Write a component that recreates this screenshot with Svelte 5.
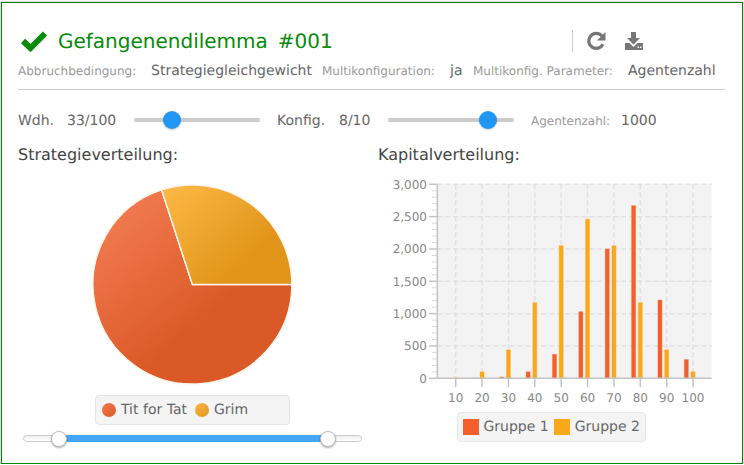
<script>
  const meta = [
    { label: 'Abbruchbedingung:', value: 'Strategiegleichgewicht' },
    { label: 'Multikonfiguration:', value: 'ja' },
    { label: 'Multikonfig. Parameter:', value: 'Agentenzahl' },
  ];

  // chart scale, in page coordinates (viewBox matches the page)
  const left = 437.3, right = 711.6, top = 184.3, bottom = 378.3;
  const y = (v) => bottom - (v / 3000) * (bottom - top);
  const x = (i) => 455.7 + i * 26.37;

  const group1 = [0, 3, 20, 100, 370, 1030, 2000, 2670, 1210, 290];
  const group2 = [10, 100, 440, 1170, 2050, 2460, 2050, 1170, 440, 100];
  const xLabels = [10, 20, 30, 40, 50, 60, 70, 80, 90, 100];
  const yLabels = [0, 500, 1000, 1500, 2000, 2500, 3000];
  const minor = Array.from({ length: 31 }, (_, i) => i * 100).filter((v) => v % 500 !== 0);
</script>

<div class="card">
  <header class="title-row">
    <svg class="check" width="28" height="22" viewBox="0 0 28 22">
      <path d="M3 11 L10.500 18 L25 3.500" fill="none" stroke="#078a07" stroke-width="6" />
    </svg>
    <h1>Gefangenendilemma<span class="num">#001</span></h1>
    <div class="tools">
      <span class="divider"></span>
      <svg width="22" height="22" viewBox="0 0 22 22" class="reload">
        <path d="M17 14.200 A7.500 7.500 0 1 1 15.900 5.900" fill="none" stroke="#777" stroke-width="3.200" />
        <path d="M19.500 2 V10.500 H11 Z" fill="#777" />
      </svg>
      <div class="save">
        <svg width="20" height="20" viewBox="0 0 20 20">
          <path d="M7 1 H12 V7 H16 L9.500 13.500 L3 7 H7 Z" fill="#777" />
          <path d="M1 12 H5.500 L9.500 16 L13.500 12 H19 V19 H1 Z" fill="#777" />
          <rect x="13.500" y="15.500" width="1.500" height="1.500" fill="#fff" />
          <rect x="16" y="15.500" width="1.500" height="1.500" fill="#fff" />
        </svg>
      </div>
    </div>
  </header>

  <div class="meta-row">
    {#each meta as m}
      <span class="label">{m.label}</span>
      <span class="value">{m.value}</span>
    {/each}
  </div>

  <hr />

  <div class="slider-row">
    <span class="value">Wdh.</span>
    <span class="value">33/100</span>
    <div class="slider"><i class="knob" style="left: 38px"></i></div>
    <span class="value">Konfig.</span>
    <span class="value">8/10</span>
    <div class="slider"><i class="knob" style="left: 100px"></i></div>
    <span class="label">Agentenzahl:</span>
    <span class="value">1000</span>
  </div>

  <div class="charts">
    <section class="col-left">
      <h2>Strategieverteilung:</h2>
      <svg class="pie" width="349" height="230" viewBox="18 165 349 230">
        <defs>
          <linearGradient id="redFill" gradientUnits="userSpaceOnUse" x1="120" y1="200" x2="215" y2="310">
            <stop offset="0" stop-color="#f37b52" />
            <stop offset="1" stop-color="#db5926" />
          </linearGradient>
          <linearGradient id="orangeFill" gradientUnits="userSpaceOnUse" x1="175" y1="185" x2="245" y2="262">
            <stop offset="0" stop-color="#fbb743" />
            <stop offset="1" stop-color="#e1951a" />
          </linearGradient>
        </defs>
        <path d="M192.400 284.500 L291.900 284.500 A99.500 99.500 0 1 1 161.600 189.900 Z" fill="url(#redFill)" stroke="#fff4ea" stroke-width="1.500" />
        <path d="M192.400 284.500 L161.600 189.900 A99.500 99.500 0 0 1 291.900 284.500 Z" fill="url(#orangeFill)" stroke="#fff4ea" stroke-width="1.500" />
      </svg>
      <div class="legend pie-legend">
        <i class="dot red"></i><span>Tit for Tat</span>
        <i class="dot orange"></i><span>Grim</span>
      </div>
      <div class="range">
        <div class="range-fill"></div>
        <i class="range-knob" style="left: 27px"></i>
        <i class="range-knob" style="left: 296px"></i>
      </div>
    </section>

    <section class="col-right">
      <h2>Kapitalverteilung:</h2>
      <svg class="bars" width="346" height="247" viewBox="378 165 346 247">
        <rect x={left} y={top} width={right - left} height={bottom - top} fill="#f3f3f3" />
        {#each yLabels as v}
          {#if v > 0}
            <line x1={left} x2={right} y1={y(v)} y2={y(v)} class="grid" />
          {/if}
          <line x1="429" x2={left} y1={y(v)} y2={y(v)} class="axis" />
          <text x="427" y={y(v) + 4.500} text-anchor="end">{v.toLocaleString('en-US')}</text>
        {/each}
        {#each minor as v}
          <line x1="432" x2={left} y1={y(v)} y2={y(v)} class="minor" />
        {/each}
        {#each xLabels as label, i}
          <line x1={x(i)} x2={x(i)} y1={top} y2={bottom} class="grid" />
          <line x1={x(i)} x2={x(i)} y1={bottom} y2="387" class="axis" />
          <text x={x(i)} y="402" text-anchor="middle">{label}</text>
        {/each}
        {#each group1 as v, i}
          <rect x={x(i) - 8.700} y={y(v)} width="4" height={bottom - y(v)} class="bar-red" />
        {/each}
        {#each group2 as v, i}
          <rect x={x(i) - 2} y={y(v)} width="4" height={bottom - y(v)} class="bar-orange" />
        {/each}
        <line x1={left} x2={left} y1={top} y2={bottom} class="axis" />
        <line x1={left} x2={right} y1={bottom} y2={bottom} class="axis" />
      </svg>
      <div class="legend bar-legend">
        <i class="swatch red-s"></i><span>Gruppe 1</span>
        <i class="swatch orange-s"></i><span>Gruppe 2</span>
      </div>
    </section>
  </div>
</div>

<style>
  :global(body) {
    background: #fff;
    font-family: "DejaVu Sans", sans-serif;
    text-rendering: geometricPrecision;
  }

  .card {
    box-sizing: border-box;
    width: 742px;
    height: 462px;
    margin: 2px 0 0 1px;
    padding: 23px 17px 0 16px;
    border: 1px solid #0a850a;
    box-shadow: 0 0 2px #999;
    overflow: hidden;
  }

  .title-row {
    display: flex;
    align-items: center;
    height: 30px;
  }

  .check {
    margin: 0 10px 0 2px;
  }

  h1 {
    margin: 0;
    font-size: 20px;
    font-weight: 400;
    color: #078a07;
    white-space: nowrap;
  }

  .num {
    margin-left: 10px;
  }

  .tools {
    display: flex;
    align-items: center;
    margin-left: auto;
    margin-right: 81px;
  }

  .divider {
    width: 1px;
    height: 22px;
    background: #ccc;
    margin-right: 13px;
  }

  .reload {
    margin-right: 16px;
  }

  .save {
    display: flex;
    align-items: center;
    justify-content: center;
    width: 20px;
    height: 20px;
  }

  .meta-row {
    display: grid;
    grid-template-columns: 133px 171px 128px 23px 155px auto;
    align-items: center;
    height: 30px;
    white-space: nowrap;
  }

  .label {
    font-size: 12px;
    color: #999;
  }

  .value {
    font-size: 14px;
    color: #666;
  }

  hr {
    width: 707px;
    height: 1px;
    margin: 3px 0 0;
    border: 0;
    background: #ccc;
  }

  .slider-row {
    display: grid;
    grid-template-columns: 49px 67px 143px 62px 49px 143px 90px auto;
    align-items: center;
    height: 30px;
    margin-top: 15px;
    white-space: nowrap;
  }

  .slider-row span {
    padding-top: 1px;
  }

  .slider {
    position: relative;
    width: 126px;
    height: 4px;
    border-radius: 2px;
    background: #ccc;
  }

  .knob {
    position: absolute;
    top: -7px;
    width: 18px;
    height: 18px;
    margin-left: -9px;
    border-radius: 50%;
    background: #2196f3;
    box-shadow: 0 1px 2px rgba(0, 0, 0, 0.2);
  }

  .charts {
    display: grid;
    grid-template-columns: 349px 346px;
    gap: 11px;
    margin-top: 10px;
  }

  h2 {
    height: 20px;
    margin: 0;
    font-size: 16px;
    font-weight: 400;
    line-height: 20px;
    color: #444;
    white-space: nowrap;
  }

  .pie,
  .bars {
    display: block;
  }

  .legend {
    box-sizing: border-box;
    display: flex;
    align-items: center;
    height: 30px;
    margin: 0 auto;
    padding-left: 6px;
    border: 1px solid #e6e6e6;
    border-radius: 4px;
    background: #f4f4f4;
    font-size: 14px;
    color: #666;
  }

  .pie-legend {
    width: 195px;
  }

  .bar-legend {
    width: 189px;
    padding-left: 5px;
  }

  .dot {
    width: 14px;
    height: 14px;
    margin-right: 5px;
    border-radius: 50%;
  }

  .dot.red {
    background: linear-gradient(135deg, #f37b52, #db5926);
  }

  .dot.orange {
    margin-left: 8px;
    background: linear-gradient(135deg, #fbb743, #e1951a);
  }

  .swatch {
    width: 16px;
    height: 16px;
    margin-right: 5px;
  }

  .red-s {
    background: #f4602c;
  }

  .orange-s {
    margin-left: 5px;
    background: #fba71b;
  }

  .range {
    position: relative;
    box-sizing: border-box;
    width: 339px;
    height: 7px;
    margin: 10px auto 0;
    border: 1px solid #ccc;
    border-radius: 4px;
    background: linear-gradient(#eee, #fff);
  }

  .range-fill {
    position: absolute;
    top: -1px;
    bottom: -1px;
    left: 35px;
    width: 270px;
    background: #42a5f5;
  }

  .range-knob {
    position: absolute;
    top: -5px;
    box-sizing: border-box;
    width: 16px;
    height: 16px;
    border: 1px solid #bbb;
    border-radius: 50%;
    background: #fff;
    box-shadow: 0 1px 2px rgba(0, 0, 0, 0.3);
  }

  .bars text {
    font-size: 12px;
    fill: #888;
  }

  .grid {
    stroke: #e0e0e0;
    stroke-width: 1.500;
    stroke-dasharray: 5 3;
  }

  .axis {
    stroke: #c4c4c4;
    stroke-width: 1.500;
  }

  .minor {
    stroke: #d8d8d8;
    stroke-width: 1;
  }

  .bar-red {
    fill: #f4602c;
    stroke: rgba(244, 96, 44, 0.35);
  }

  .bar-orange {
    fill: #fba71b;
    stroke: rgba(251, 167, 27, 0.35);
  }
</style>
